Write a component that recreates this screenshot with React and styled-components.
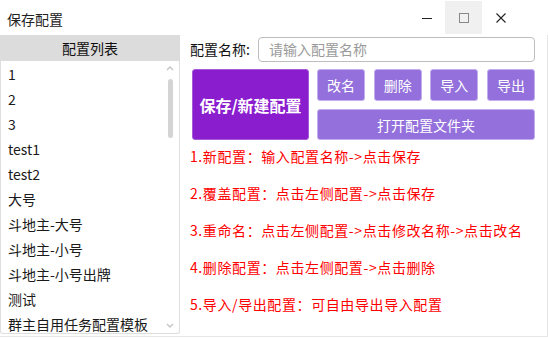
import React from 'react';
import styled, { createGlobalStyle } from 'styled-components';

const font = `"Noto Sans CJK SC", "Noto Sans", sans-serif`;

const GlobalStyle = createGlobalStyle`
  html, body {
    margin: 0;
    padding: 0;
    background: #fff;
  }
  body {
    font-family: ${font};
  }
`;

const Window = styled.div`
  width: 548px;
  height: 339px;
  display: flex;
  flex-direction: column;
  background: #fff;
  overflow: hidden;
`;

const TitleBar = styled.div`
  height: 35px;
  display: flex;
  align-items: center;
  padding-left: 7px;
  box-sizing: border-box;
`;

const Title = styled.div`
  flex: 1;
  font-size: 14px;
  color: #222;
  line-height: 1;
  margin-top: 2px;
`;

const Controls = styled.div`
  display: flex;
  align-self: stretch;
  padding: 1px 0 1px 0;
  margin-right: 29px;
`;

const CtrlBtn = styled.div`
  width: 37px;
  display: flex;
  align-items: center;
  justify-content: center;
  background: ${(p) => (p.$hover ? '#f0f0f0' : 'transparent')};
`;

const Body = styled.div`
  flex: 1;
  display: flex;
  min-height: 0;
  border-right: 1px solid #e6e6e6;
  border-bottom: 1px solid #e6e6e6;
  margin-bottom: 2px;
`;

const ListPanel = styled.div`
  width: 180px;
  display: flex;
  flex-direction: column;
  padding-bottom: 2px;
`;

const ListHeader = styled.div`
  height: 26px;
  background: #dcdcdc;
  font-size: 14px;
  color: #111;
  display: flex;
  align-items: center;
  justify-content: center;
`;

const List = styled.div`
  flex: 1;
  position: relative;
  border: 1px solid #dedede;
  border-top: none;
  border-radius: 0 0 3px 3px;
  padding-top: 1px;
  overflow: hidden;
`;

const Item = styled.div`
  height: 25px;
  line-height: 25px;
  padding-left: 7px;
  font-size: 14px;
  color: #1a1a1a;
  white-space: nowrap;
`;

const ScrollTrack = styled.div`
  position: absolute;
  right: 5px;
  top: 4px;
  bottom: 4px;
  width: 8px;
  display: flex;
  flex-direction: column;
  align-items: center;
`;

const Thumb = styled.div`
  width: 5px;
  height: 59px;
  margin-top: 8px;
  border-radius: 3px;
  background: #d4d4d4;
`;

const Spacer = styled.div`
  flex: 1;
`;

const RightPanel = styled.div`
  flex: 1;
  padding: 1px 12px 0 10px;
  display: flex;
  flex-direction: column;
`;

const NameRow = styled.div`
  display: flex;
  align-items: center;
  height: 26px;
`;

const Label = styled.div`
  font-size: 14px;
  color: #111;
  width: 68px;
`;

const Input = styled.input`
  flex: 1;
  height: 25px;
  box-sizing: border-box;
  border: 1px solid #bdbdbd;
  border-radius: 4px;
  padding: 0 10px;
  font-family: ${font};
  font-size: 14px;
  color: #333;
  outline: none;
  &::placeholder {
    color: #9a9a9a;
  }
`;

const ButtonArea = styled.div`
  display: flex;
  gap: 8px;
  margin-top: 7px;
  margin-left: 2px;
`;

const BigButton = styled.div`
  width: 117px;
  height: 71px;
  box-sizing: border-box;
  background: #8a1ecf;
  border: 1px solid #a35bd6;
  border-radius: 3px;
  color: #fff;
  font-weight: bold;
  font-size: 16px;
  display: flex;
  align-items: center;
  justify-content: center;
`;

const SmallGrid = styled.div`
  flex: 1;
  display: flex;
  flex-direction: column;
  gap: 8px;
`;

const SmallRow = styled.div`
  display: flex;
  justify-content: space-between;
`;

const Btn = styled.div`
  width: ${(p) => (p.$wide ? 'auto' : '48px')};
  height: ${(p) => (p.$wide ? 31 : 32)}px;
  box-sizing: border-box;
  background: #9370db;
  border: 1px solid #c2adee;
  border-radius: 3px;
  color: #fff;
  font-size: 14px;
  display: flex;
  align-items: center;
  justify-content: center;
`;

const Tips = styled.div`
  display: flex;
  flex-direction: column;
  margin-top: 7px;
`;

const Tip = styled.div`
  height: 37px;
  line-height: 18px;
  font-size: 14px;
  letter-spacing: 0.6px;
  color: #ff0000;
  white-space: nowrap;
`;

const items = [
  '1',
  '2',
  '3',
  'test1',
  'test2',
  '大号',
  '斗地主-大号',
  '斗地主-小号',
  '斗地主-小号出牌',
  '测试',
  '群主自用任务配置模板',
];

const tips = [
  '1.新配置：输入配置名称->点击保存',
  '2.覆盖配置：点击左侧配置->点击保存',
  '3.重命名：点击左侧配置->点击修改名称->点击改名',
  '4.删除配置：点击左侧配置->点击删除',
  '5.导入/导出配置：可自由导出导入配置',
];

export default function App() {
  return (
    <Window>
      <GlobalStyle />
      <TitleBar>
        <Title>保存配置</Title>
        <Controls>
          <CtrlBtn>
            <svg width="12" height="12" viewBox="0 0 12 12">
              <line x1="1" y1="6.5" x2="11" y2="6.5" stroke="#222" strokeWidth="1" />
            </svg>
          </CtrlBtn>
          <CtrlBtn $hover>
            <svg width="12" height="12" viewBox="0 0 12 12">
              <rect x="1.5" y="1.5" width="9" height="9" fill="none" stroke="#888" strokeWidth="1" />
            </svg>
          </CtrlBtn>
          <CtrlBtn>
            <svg width="12" height="12" viewBox="0 0 12 12">
              <path d="M1.5 1.5 L10.5 10.5 M10.5 1.5 L1.5 10.5" stroke="#222" strokeWidth="1.1" />
            </svg>
          </CtrlBtn>
        </Controls>
      </TitleBar>
      <Body>
        <ListPanel>
          <ListHeader>配置列表</ListHeader>
          <List>
            {items.map((it) => (
              <Item key={it}>{it}</Item>
            ))}
            <ScrollTrack>
              <svg width="8" height="6" viewBox="0 0 8 6">
                <path d="M1 5 L4 2 L7 5" fill="none" stroke="#c4c4c4" strokeWidth="1.3" />
              </svg>
              <Thumb />
              <Spacer />
              <svg width="8" height="6" viewBox="0 0 8 6">
                <path d="M1 1 L4 4 L7 1" fill="none" stroke="#c4c4c4" strokeWidth="1.3" />
              </svg>
            </ScrollTrack>
          </List>
        </ListPanel>
        <RightPanel>
          <NameRow>
            <Label>配置名称:</Label>
            <Input placeholder="请输入配置名称" />
          </NameRow>
          <ButtonArea>
            <BigButton>保存/新建配置</BigButton>
            <SmallGrid>
              <SmallRow>
                <Btn>改名</Btn>
                <Btn>删除</Btn>
                <Btn>导入</Btn>
                <Btn>导出</Btn>
              </SmallRow>
              <Btn $wide>打开配置文件夹</Btn>
            </SmallGrid>
          </ButtonArea>
          <Tips>
            {tips.map((t) => (
              <Tip key={t}>{t}</Tip>
            ))}
          </Tips>
        </RightPanel>
      </Body>
    </Window>
  );
}
